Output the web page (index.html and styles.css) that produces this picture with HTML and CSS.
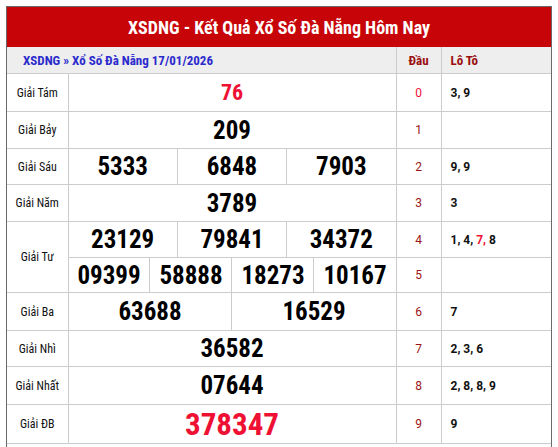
FILE: index.html
```html
<!DOCTYPE html>
<html lang="vi">
<head>
<meta charset="utf-8">
<title>XSDNG</title>
<link rel="stylesheet" href="styles.css">
</head>
<body>
<div class="box">
  <div class="title">XSDNG - Kết Quả Xổ Số Đà Nẵng Hôm Nay</div>
  <table class="kq">
    <colgroup>
      <col class="c-label">
      <col><col><col><col><col><col><col><col><col><col><col><col>
      <col class="c-dau">
      <col class="c-loto">
    </colgroup>
    <thead>
      <tr class="head">
        <th colspan="13" class="crumb">XSDNG » Xổ Số Đà Nẵng 17/01/2026</th>
        <th class="dau-h">Đầu</th>
        <th class="loto-h">Lô Tô</th>
      </tr>
    </thead>
    <tbody>
      <tr class="r38">
        <td class="label">Giải Tám</td>
        <td colspan="12" class="num red small">76</td>
        <td class="dau hot">0</td>
        <td class="loto">3, 9</td>
      </tr>
      <tr class="r37">
        <td class="label">Giải Bảy</td>
        <td colspan="12" class="num">209</td>
        <td class="dau">1</td>
        <td class="loto"></td>
      </tr>
      <tr class="r36">
        <td class="label">Giải Sáu</td>
        <td colspan="4" class="num">5333</td>
        <td colspan="4" class="num">6848</td>
        <td colspan="4" class="num">7903</td>
        <td class="dau">2</td>
        <td class="loto">9, 9</td>
      </tr>
      <tr class="r37">
        <td class="label">Giải Năm</td>
        <td colspan="12" class="num">3789</td>
        <td class="dau">3</td>
        <td class="loto">3</td>
      </tr>
      <tr class="r36">
        <td class="label" rowspan="2">Giải Tư</td>
        <td colspan="4" class="num">23129</td>
        <td colspan="4" class="num">79841</td>
        <td colspan="4" class="num">34372</td>
        <td class="dau">4</td>
        <td class="loto">1, 4, <span class="hl">7,</span> 8</td>
      </tr>
      <tr class="r35">
        <td colspan="3" class="num">09399</td>
        <td colspan="3" class="num">58888</td>
        <td colspan="3" class="num">18273</td>
        <td colspan="3" class="num">10167</td>
        <td class="dau">5</td>
        <td class="loto"></td>
      </tr>
      <tr class="r38">
        <td class="label">Giải Ba</td>
        <td colspan="6" class="num">63688</td>
        <td colspan="6" class="num">16529</td>
        <td class="dau">6</td>
        <td class="loto">7</td>
      </tr>
      <tr class="r36">
        <td class="label">Giải Nhì</td>
        <td colspan="12" class="num">36582</td>
        <td class="dau">7</td>
        <td class="loto">2, 3, 6</td>
      </tr>
      <tr class="r38">
        <td class="label">Giải Nhất</td>
        <td colspan="12" class="num">07644</td>
        <td class="dau">8</td>
        <td class="loto">2, 8, 8, 9</td>
      </tr>
      <tr class="r39">
        <td class="label">Giải ĐB</td>
        <td colspan="12" class="num red big">378347</td>
        <td class="dau">9</td>
        <td class="loto">9</td>
      </tr>
    </tbody>
  </table>
</div>
</body>
</html>
```

FILE: styles.css
```css
html, body {
  margin: 0;
  padding: 0;
  background: #ffffff;
}

body {
  padding: 6px;
  font-family: Roboto, "Liberation Sans", sans-serif;
  color: #111;
}

.box {
  width: 544px;
  border: 1px solid #6a6a6a;
  border-bottom: none;
  padding-bottom: 20px;
}

.title {
  height: 40px;
  background: #c70408;
  color: #ffffff;
  font-weight: 700;
  font-size: 18px;
  font-stretch: 87.5%;
  display: flex;
  align-items: center;
  justify-content: center;
}

.kq {
  width: 544px;
  border-collapse: collapse;
  table-layout: fixed;
}

.c-label { width: 61px; }
.c-dau { width: 45px; }
.c-loto { width: 110px; }

.kq th,
.kq td {
  border: 1px solid #cccccc;
  padding: 0;
  overflow: hidden;
  white-space: nowrap;
}

.kq tr > :first-child { border-left: none; }
.kq tr > :last-child { border-right: none; }
.kq thead th { border-top: none; }

.head th {
  height: 26px;
  background: #eeeeee;
  font-weight: 700;
  font-size: 13px;
  font-stretch: 87.5%;
}

.crumb {
  text-align: left;
  padding-left: 16px !important;
  color: #2b2bcc;
}

.dau-h {
  color: #99100f;
  text-align: center;
}

.loto-h {
  color: #99100f;
  text-align: left;
  padding-left: 9px !important;
}

.r35 td { height: 34px; }
.r36 td { height: 35px; }
.r37 td { height: 36px; }
.r38 td { height: 37px; }
.r39 td { height: 38px; }

.label {
  text-align: center;
  font-size: 12px;
  font-stretch: 87.5%;
  color: #111;
}

.num {
  text-align: center;
  font-weight: 700;
  font-size: 25px;
  font-stretch: 87.5%;
  color: #000;
}

.num.small { font-size: 22px; }
.num.big { font-size: 31px; }
.num.red { color: #ee1133; }

.dau {
  text-align: center;
  font-size: 12px;
  color: #9b1515;
}

.dau.hot { color: #f0103a; }

.loto {
  padding-left: 9px !important;
  font-size: 12px;
  font-weight: 700;
  color: #111;
}

.hl { color: #ee1133; }
```
